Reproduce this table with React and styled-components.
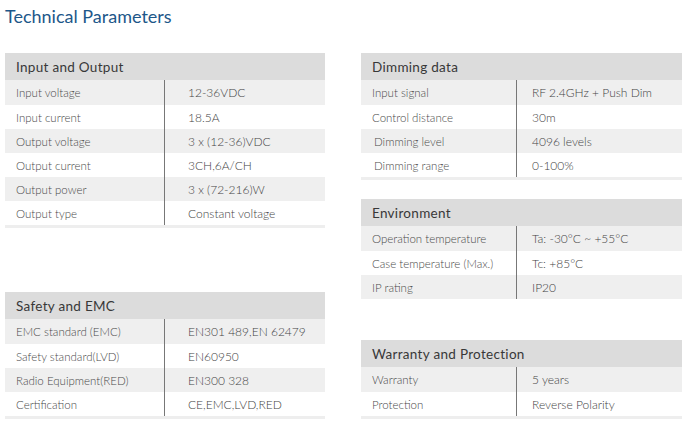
import React from "react";
import styled, { createGlobalStyle } from "styled-components";

const Global = createGlobalStyle`
  html, body { margin: 0; padding: 0; background: #fff; }
  body { font-family: "Lato", "Open Sans", sans-serif; }
`;

const Page = styled.div`
  width: 688px;
  height: 425px;
  box-sizing: border-box;
  padding: 3px 0 0 5px;
  overflow: hidden;
`;

const Title = styled.h1`
  margin: 0;
  font-family: "Lato", sans-serif;
  font-weight: 400;
  font-size: 18px;
  line-height: 26px;
  color: #1d5789;
`;

const Columns = styled.div`
  display: grid;
  grid-template-columns: 320px 321px;
  column-gap: 36px;
  margin-top: 24px;
  align-items: start;
`;

const Column = styled.div`
  display: flex;
  flex-direction: column;
`;

const Table = styled.div`
  margin-top: ${(p) => p.$top || 0}px;
  padding-bottom: ${(p) => (p.$strip ? 3 : 0)}px;
  background: ${(p) => (p.$strip ? "#eeeeee" : "transparent")};
`;

const Header = styled.div`
  height: 27px;
  background: #dcdcdc;
  display: flex;
  align-items: center;
  padding-left: 11px;
  font-size: 13.5px;
  color: #383838;
  letter-spacing: 0.3px;
`;

const Row = styled.div`
  display: grid;
  grid-template-columns: ${(p) => p.$split}px 1fr;
  height: ${(p) => p.$h || 24}px;
  background: ${(p) => (p.$shade ? "#efefef" : "#fff")};
`;

const Label = styled.div`
  display: flex;
  align-items: center;
  padding-left: ${(p) => 11 + (p.$indent || 0)}px;
  font-size: 11.5px;
  font-weight: 300;
  color: #4a4a4a;
  border-right: 1px solid #777;
  white-space: nowrap;
`;

const Value = styled.div`
  display: flex;
  align-items: center;
  padding-left: ${(p) => p.$pad}px;
  font-size: 12px;
  font-weight: 300;
  color: #444;
  white-space: nowrap;
`;

const Spec = ({ title, rows, split, pad, top, strip }) => (
  <Table $top={top} $strip={strip}>
    <Header>{title}</Header>
    {rows.map(([k, v, indent], i) => (
      <Row key={k} $split={split} $shade={i % 2 === 0} $h={i === 0 ? 25 : 24}>
        <Label $indent={indent}>{k}</Label>
        <Value $pad={pad}>{v}</Value>
      </Row>
    ))}
  </Table>
);

const inputOutput = [
  ["Input voltage", "12-36VDC"],
  ["Input current", "18.5A"],
  ["Output voltage", "3 x (12-36)VDC"],
  ["Output current", "3CH,6A/CH"],
  ["Output power", "3 x (72-216)W"],
  ["Output type", "Constant voltage"],
];

const safety = [
  ["EMC standard (EMC)", "EN301 489,EN 62479"],
  ["Safety standard(LVD)", "EN60950"],
  ["Radio Equipment(RED)", "EN300 328"],
  ["Certification", "CE,EMC,LVD,RED"],
];

const dimming = [
  ["Input signal", "RF 2.4GHz + Push Dim"],
  ["Control distance", "30m"],
  ["Dimming level", "4096 levels", 2],
  ["Dimming range", "0-100%", 2],
];

const environment = [
  ["Operation temperature", "Ta: -30°C ~ +55°C"],
  ["Case temperature (Max.)", "Tc: +85°C"],
  ["IP rating", "IP20"],
];

const warranty = [
  ["Warranty", "5 years"],
  ["Protection", "Reverse Polarity"],
];

export default function App() {
  return (
    <>
      <Global />
      <Page>
        <Title>Technical Parameters</Title>
        <Columns>
          <Column>
            <Spec title="Input and Output" rows={inputOutput} split={160} pad={23} strip />
            <Spec title="Safety and EMC" rows={safety} split={160} pad={23} top={64} strip />
          </Column>
          <Column>
            <Spec title="Dimming data" rows={dimming} split={156} pad={15} strip />
            <Spec title="Environment" rows={environment} split={156} pad={15} top={19} />
            <Spec title="Warranty and Protection" rows={warranty} split={156} pad={15} top={41} strip />
          </Column>
        </Columns>
      </Page>
    </>
  );
}
